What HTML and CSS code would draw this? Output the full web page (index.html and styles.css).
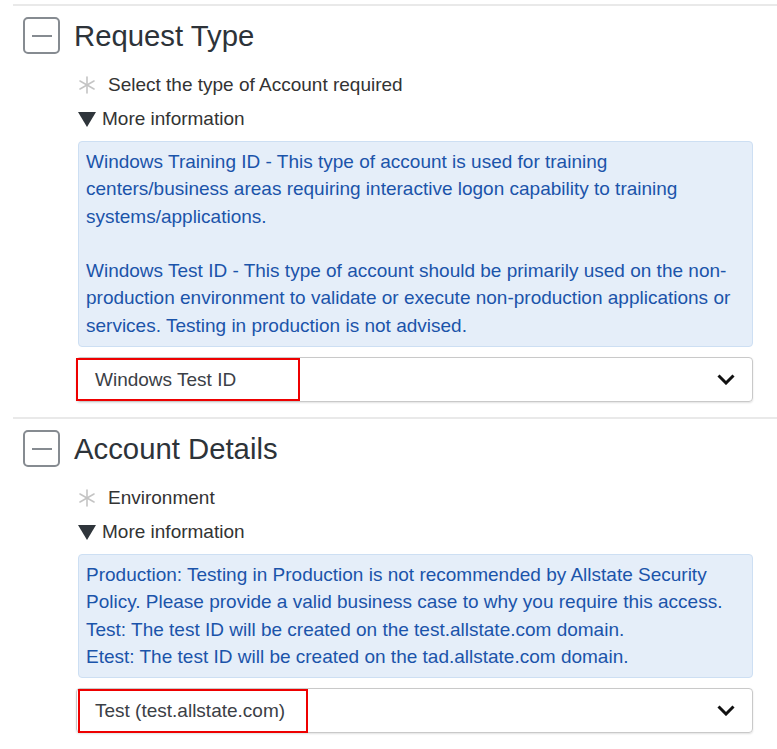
FILE: index.html
```html
<!DOCTYPE html>
<html lang="en">
<head>
<meta charset="utf-8">
<title>Request form</title>
<link rel="stylesheet" href="styles.css">
</head>
<body>
<div class="page">
  <section class="section">
    <div class="section-head">
      <span class="toggle"><span class="toggle-bar"></span></span>
      <h2 class="section-title">Request Type</h2>
    </div>
    <div class="field">
      <div class="label-row">
        <svg class="req" viewBox="0 0 18 18" aria-hidden="true"><g stroke="#c4c4c4" stroke-width="1.6" stroke-linecap="round"><line x1="9" y1="1" x2="9" y2="17"/><line x1="2" y1="5" x2="16" y2="13"/><line x1="2" y1="13" x2="16" y2="5"/></g></svg>
        <span class="label-text">Select the type of Account required</span>
      </div>
      <div class="more-row">
        <svg class="tri" viewBox="0 0 18 16" aria-hidden="true"><polygon points="0,1 18,1 9,16" fill="#2f353b"/></svg>
        <span class="more-text">More information</span>
      </div>
      <div class="info">
        <div>Windows Training ID - This type of account is used for training centers/business areas requiring interactive logon capability to training systems/applications.</div>
        <div class="para">Windows Test ID - This type of account should be primarily used on the non-production environment to validate or execute non-production applications or services. Testing in production is not advised.</div>
      </div>
      <div class="select">
        <span class="select-value">Windows Test ID</span>
        <svg class="chev" viewBox="0 0 18 11" aria-hidden="true"><polyline points="1.5,1.5 9,9 16.5,1.5" fill="none" stroke="#111" stroke-width="3" stroke-linejoin="miter"/></svg>
        <span class="mark mark-1"></span>
      </div>
    </div>
  </section>
  <section class="section">
    <div class="section-head">
      <span class="toggle"><span class="toggle-bar"></span></span>
      <h2 class="section-title">Account Details</h2>
    </div>
    <div class="field">
      <div class="label-row">
        <svg class="req" viewBox="0 0 18 18" aria-hidden="true"><g stroke="#c4c4c4" stroke-width="1.6" stroke-linecap="round"><line x1="9" y1="1" x2="9" y2="17"/><line x1="2" y1="5" x2="16" y2="13"/><line x1="2" y1="13" x2="16" y2="5"/></g></svg>
        <span class="label-text">Environment</span>
      </div>
      <div class="more-row">
        <svg class="tri" viewBox="0 0 18 16" aria-hidden="true"><polygon points="0,1 18,1 9,16" fill="#2f353b"/></svg>
        <span class="more-text">More information</span>
      </div>
      <div class="info">
        <div>Production: Testing in Production is not recommended by Allstate Security Policy. Please provide a valid business case to why you require this access.</div>
        <div>Test: The test ID will be created on the test.allstate.com domain.</div>
        <div>Etest: The test ID will be created on the tad.allstate.com domain.</div>
      </div>
      <div class="select">
        <span class="select-value">Test (test.allstate.com)</span>
        <svg class="chev" viewBox="0 0 18 11" aria-hidden="true"><polyline points="1.5,1.5 9,9 16.5,1.5" fill="none" stroke="#111" stroke-width="3" stroke-linejoin="miter"/></svg>
        <span class="mark mark-2"></span>
      </div>
    </div>
  </section>
</div>
</body>
</html>
```

FILE: styles.css
```css
html, body {
  margin: 0;
  padding: 0;
  background: #ffffff;
}

body {
  font-family: "Liberation Sans", Arial, sans-serif;
  color: #333333;
}

.page {
  padding-top: 4px;
  margin-left: 13px;
}

.section {
  border-top: 2px solid #e9e9e9;
  padding: 11px 0 15px 0;
}

.section-head {
  display: flex;
  align-items: center;
  gap: 14px;
  padding-left: 10px;
}

.toggle {
  box-sizing: border-box;
  width: 37px;
  height: 37px;
  border: 2px solid #868b91;
  border-radius: 5px;
  display: flex;
  align-items: center;
  justify-content: center;
}

.toggle-bar {
  width: 20px;
  height: 2px;
  background: #868b91;
}

.section-title {
  margin: 0;
  font-size: 29.3px;
  font-weight: normal;
  color: #2d3339;
  line-height: 37px;
}

.field {
  padding-left: 63px;
  padding-right: 24px;
}

.label-row,
.more-row {
  display: flex;
  align-items: center;
  height: 24px;
  font-size: 19px;
  color: #333333;
}

.label-row {
  margin-top: 19px;
  padding-left: 2px;
}

.more-row {
  margin-top: 10px;
  padding-left: 2px;
}

.req {
  width: 18px;
  height: 18px;
  margin-right: 12px;
}

.tri {
  width: 18px;
  height: 16px;
  margin-right: 6px;
}

.info {
  margin-top: 10px;
  margin-left: 2px;
  background: #e5eef9;
  border: 1px solid #cddff3;
  border-radius: 4px;
  padding: 6px 8px 7px 7px;
  font-size: 19px;
  line-height: 27.3px;
  color: #1b54aa;
}

.info .para {
  margin-top: 27.3px;
}

.select {
  position: relative;
  box-sizing: border-box;
  margin-top: 10px;
  height: 45px;
  border: 1px solid #c9c9c9;
  border-radius: 4px;
  box-shadow: 0 1px 2px rgba(0, 0, 0, 0.12);
  display: flex;
  align-items: center;
  justify-content: space-between;
  padding: 0 17px 0 18px;
  font-size: 19px;
  color: #3b4046;
}

.chev {
  width: 18px;
  height: 11px;
}

.mark {
  position: absolute;
  top: 0;
  left: -1px;
  height: 43px;
  border: 2px solid #ee0000;
  box-sizing: border-box;
}

.mark-1 {
  width: 224px;
}

.mark-2 {
  left: 1px;
  width: 230px;
  height: 44px;
}
```
